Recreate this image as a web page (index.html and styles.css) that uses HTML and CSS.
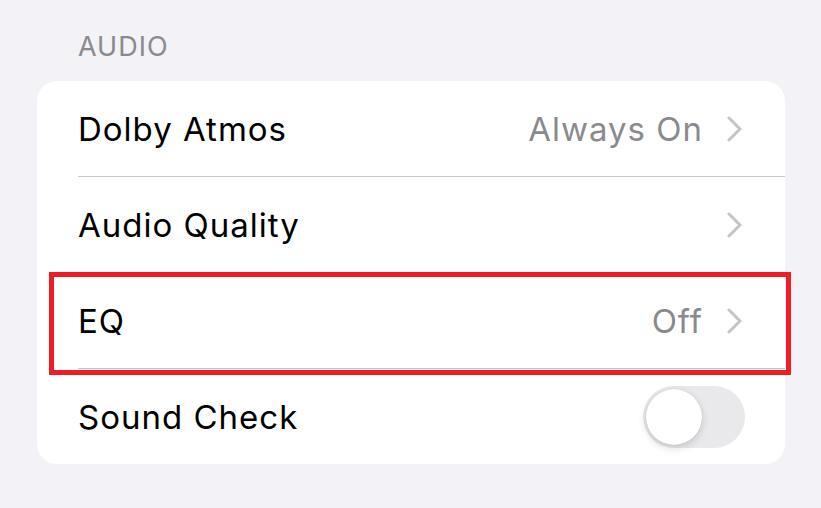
FILE: index.html
```html
<!DOCTYPE html>
<html lang="en">
<head>
    <meta charset="utf-8">
    <title>Audio</title>
    <link rel="stylesheet" href="styles.css">
</head>
<body>
<div class="page">
    <div class="section-title">AUDIO</div>
    <div class="group">
        <div class="row">
            <div class="row-body">
                <span class="label">Dolby Atmos</span>
                <span class="value">Always On</span>
                <svg class="chevron" width="15" height="26" viewBox="0 0 15 26"><path d="M2 2 L13 13 L2 24" fill="none" stroke="#c4c4c7" stroke-width="3" stroke-linecap="round" stroke-linejoin="round"/></svg>
            </div>
        </div>
        <div class="row">
            <div class="row-body">
                <span class="label">Audio Quality</span>
                <svg class="chevron" width="15" height="26" viewBox="0 0 15 26"><path d="M2 2 L13 13 L2 24" fill="none" stroke="#c4c4c7" stroke-width="3" stroke-linecap="round" stroke-linejoin="round"/></svg>
            </div>
        </div>
        <div class="row marked">
            <div class="row-body">
                <span class="label">EQ</span>
                <span class="value">Off</span>
                <svg class="chevron" width="15" height="26" viewBox="0 0 15 26"><path d="M2 2 L13 13 L2 24" fill="none" stroke="#c4c4c7" stroke-width="3" stroke-linecap="round" stroke-linejoin="round"/></svg>
            </div>
            <span class="highlight"></span>
        </div>
        <div class="row">
            <div class="row-body last">
                <span class="label">Sound Check</span>
                <span class="switch"><i class="knob"></i></span>
            </div>
        </div>
    </div>
</div>
</body>
</html>
```

FILE: styles.css
```css
body {
    margin: 0;
    background-color: #f2f2f7;
    font-family: Inter, "Liberation Sans", sans-serif;
}

.page {
    padding: 31px 36px 0 37px;
}

.section-title {
    padding-left: 41px;
    font-size: 27px;
    line-height: 32px;
    letter-spacing: 1px;
    color: #8a8a8e;
    margin-bottom: 18px;
}

.group {
    background-color: #fff;
    border-radius: 20px;
}

.row {
    position: relative;
    padding-left: 41px;
}

.row-body {
    display: flex;
    align-items: center;
    height: 95px;
    padding-right: 43px;
    border-bottom: 1px solid #c8c7cc;
}

.row-body.last {
    border-bottom: none;
    padding-right: 40px;
}

.label {
    flex: 1;
    font-size: 33px;
    letter-spacing: 1px;
    color: #000;
}

.value {
    font-size: 33px;
    letter-spacing: 1px;
    color: #8a8a8e;
    margin-right: 24px;
}

.chevron {
    display: block;
}

/* red frame drawn over the EQ row */
.highlight {
    position: absolute;
    left: 12px;
    right: -6px;
    top: -1px;
    bottom: -6px;
    border: 5px solid #ee1c25;
}

.switch {
    position: relative;
    width: 102px;
    height: 62px;
    border-radius: 31px;
    background-color: #e9e9eb;
}

.knob {
    position: absolute;
    left: 3px;
    top: 3px;
    width: 56px;
    height: 56px;
    border-radius: 50%;
    background-color: #fff;
    box-shadow: 0 3px 8px rgba(0, 0, 0, 0.15), 0 0 1px rgba(0, 0, 0, 0.2);
}
```
